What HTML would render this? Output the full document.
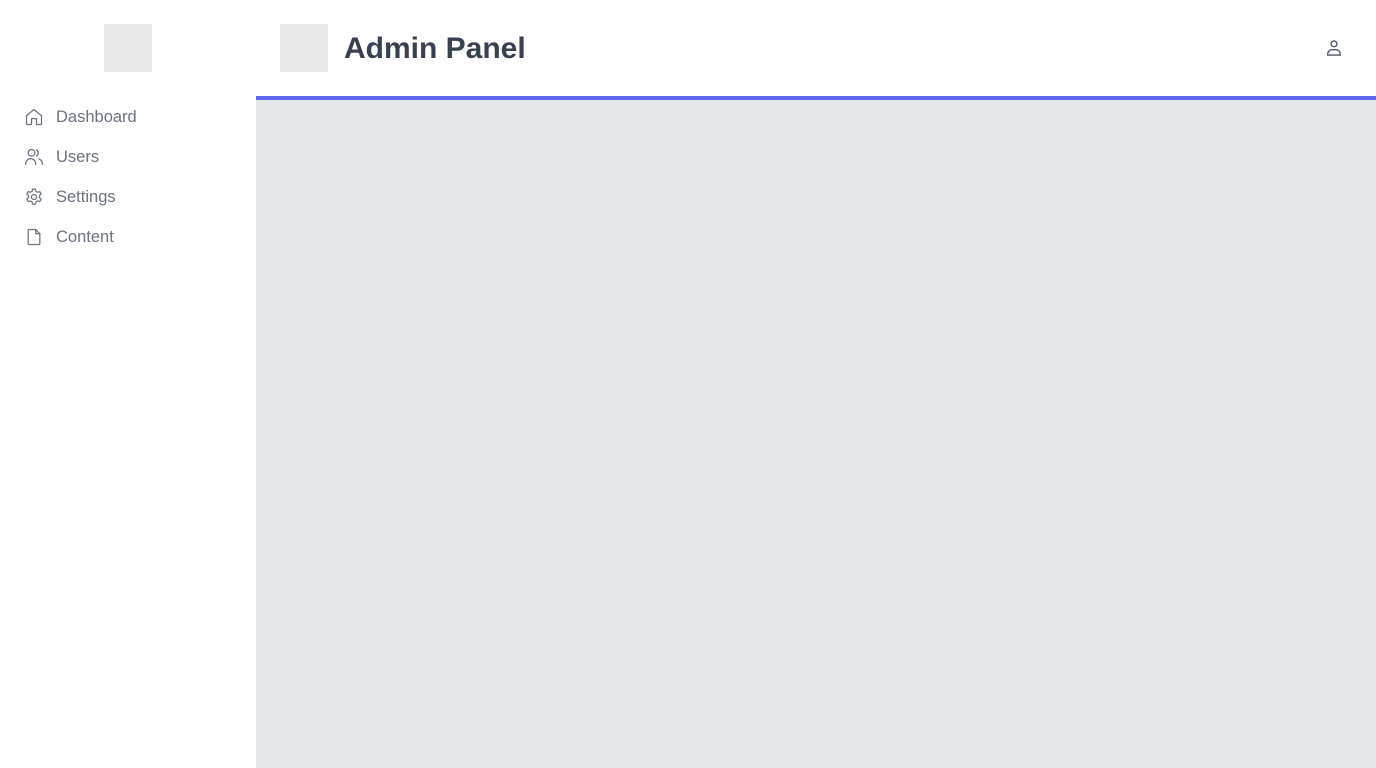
<!DOCTYPE html>
<html><head><style>
*{margin:0;padding:0;box-sizing:border-box}
body{width:1376px;height:768px;overflow:hidden;font-family:"Liberation Sans",sans-serif;background:#fff;position:relative}
.side{position:absolute;left:0;top:0;width:256px;height:768px;background:#fff}
.logo{position:absolute;width:48px;height:48px;background:#e8e8e8}
.nav{position:absolute;left:24px;display:flex;align-items:center;color:#6b7280;font-size:16.5px}
.nav svg{width:20px;height:20px;margin-right:12px;stroke:#6b7280;fill:none;stroke-width:1.5;stroke-linecap:round;stroke-linejoin:round}
.main{position:absolute;left:256px;top:100px;right:0;bottom:0;background:#e5e7eb}
.bar{position:absolute;left:256px;top:96px;right:0;height:4px;background:#6366f1}
h1{position:absolute;left:344px;top:30px;font-size:30px;font-weight:bold;color:#374151;line-height:38px}
</style></head><body>
<div class="side">
<div class="logo" style="left:104px;top:24px"></div>
<div class="nav" style="top:107px"><svg viewBox="0 0 24 24"><path d="M3 10.5 12 3l9 7.5V20a1 1 0 0 1-1 1h-5v-7H9v7H4a1 1 0 0 1-1-1z"/></svg>Dashboard</div>
<div class="nav" style="top:147px"><svg viewBox="0 0 24 24"><circle cx="9" cy="7" r="4"/><path d="M2 21v-1a6 6 0 0 1 12 0v1M15 3.5a4 4 0 0 1 0 7M22 21v-1a6 6 0 0 0-4-5.6"/></svg>Users</div>
<div class="nav" style="top:187px"><svg viewBox="0 0 24 24"><circle cx="12" cy="12" r="3"/><path d="M10.3 2.5h3.4l.6 2.6 2 1.2 2.6-.8 1.7 3-2 1.8v2.4l2 1.8-1.7 3-2.6-.8-2 1.2-.6 2.6h-3.4l-.6-2.6-2-1.2-2.6.8-1.7-3 2-1.8v-2.4l-2-1.8 1.7-3 2.6.8 2-1.2z"/></svg>Settings</div>
<div class="nav" style="top:227px"><svg viewBox="0 0 24 24"><path d="M14 3H6a1 1 0 0 0-1 1v16a1 1 0 0 0 1 1h12a1 1 0 0 0 1-1V8z"/><path d="M14 3v5h5"/></svg>Content</div>
</div>
<div class="logo" style="left:280px;top:24px"></div>
<h1>Admin Panel</h1>
<svg style="position:absolute;left:1324px;top:38px" width="20" height="20" viewBox="0 0 24 24" fill="none" stroke="#4b5563" stroke-width="1.6"><circle cx="12" cy="7" r="3.5"/><path d="M4.5 20.5v-1.5a5 5 0 0 1 5-5h5a5 5 0 0 1 5 5v1.5z"/></svg>
<div class="bar"></div>
<div class="main"></div>
</body></html>
